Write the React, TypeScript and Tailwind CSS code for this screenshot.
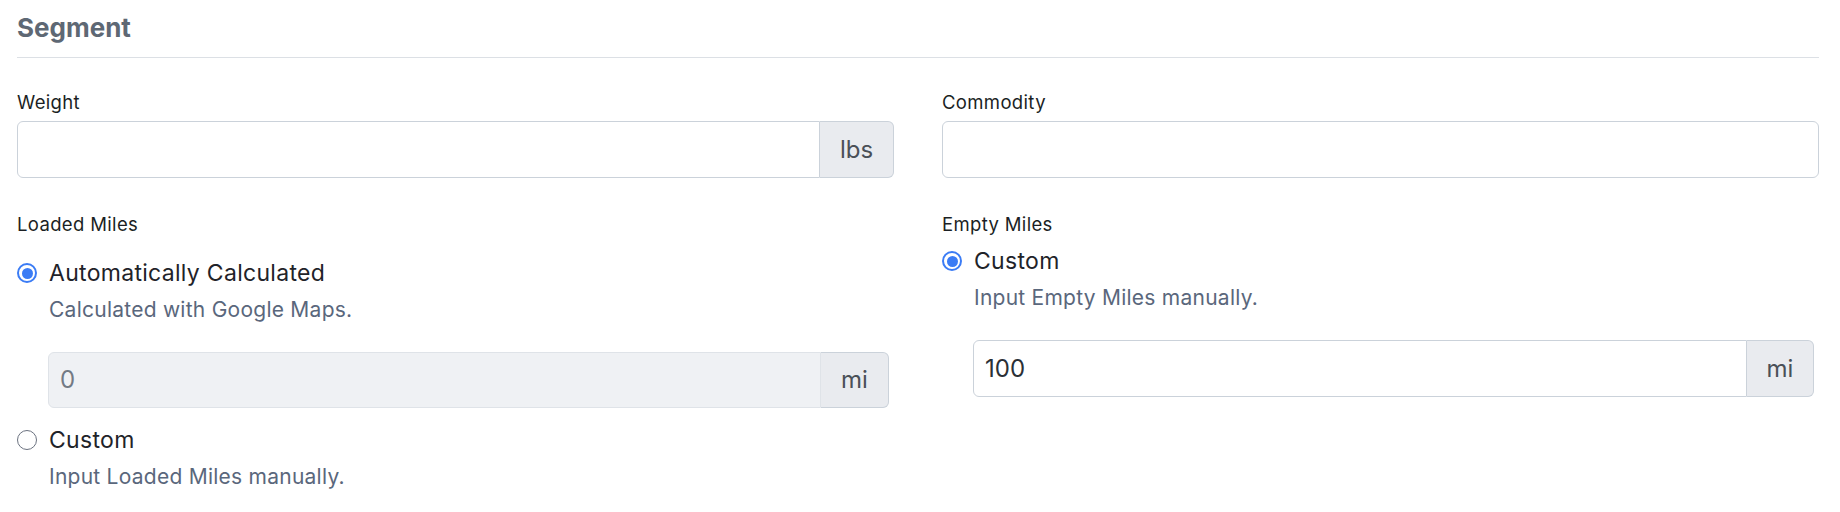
import React from 'react';

const font = { fontFamily: 'Inter, "Noto Sans", sans-serif' };

const Radio: React.FC<{ checked?: boolean }> = ({ checked }) =>
  checked ? (
    <span className="flex h-[20px] w-[20px] shrink-0 items-center justify-center rounded-full border-[2px] border-[#3b7cf5] bg-white">
      <span className="h-[11px] w-[11px] rounded-full bg-[#3b7cf5]" />
    </span>
  ) : (
    <span className="h-[20px] w-[20px] shrink-0 rounded-full border-[1.5px] border-[#6b7280] bg-white" />
  );

const InputGroup: React.FC<{ value?: string; unit: string; unitWidth: string; disabled?: boolean; height?: string }> = ({
  value,
  unit,
  unitWidth,
  disabled,
  height = 'h-[57px]',
}) => (
  <div className={`flex ${height} w-full`}>
    <div
      className={`flex flex-1 items-center rounded-l-[6px] border px-[11px] text-[24px] ${
        disabled ? 'border-[#dfe3e8] bg-[#eff1f4] text-[#737a84]' : 'border-[#cbd2da] bg-white text-[#2b3036]'
      }`}
    >
      {value}
    </div>
    <div
      className={`flex ${unitWidth} items-center justify-center rounded-r-[6px] border border-l-0 border-[#cbd2da] bg-[#e9ebef] text-[24px] text-[#4a5058]`}
    >
      {unit}
    </div>
  </div>
);

const Option: React.FC<{ checked?: boolean; title: string; desc: string; className?: string }> = ({
  checked,
  title,
  desc,
  className = '',
}) => (
  <div className={className}>
    <div className="flex items-center gap-[12px]">
      <Radio checked={checked} />
      <span className="text-[23px] leading-[30px] tracking-[0.3px] text-[#1f2329]">{title}</span>
    </div>
    <div className="mt-[8px] pl-[32px] text-[21px] leading-[28px] tracking-[0.25px] text-[#5a677c]">{desc}</div>
  </div>
);

const labelCls = 'block text-[18.5px] leading-[24px] tracking-[0.35px] text-[#1b1f24]';

export default function App() {
  return (
    <div className="h-[512px] w-full bg-white pl-[17px] pr-[21px]" style={font}>
      {/* Header */}
      <div className="h-[58px] border-b border-[#dce0e5] pt-[12px]">
        <h2 className="text-[26px] font-bold leading-[32px] text-[#5e6874]">Segment</h2>
      </div>

      <div className="mt-[32px] grid grid-cols-2 gap-x-[48px]">
        {/* Weight */}
        <div>
          <label className={labelCls}>Weight</label>
          <div className="mt-[7px]">
            <InputGroup unit="lbs" unitWidth="w-[74px]" />
          </div>
        </div>

        {/* Commodity */}
        <div>
          <label className={labelCls}>Commodity</label>
          <div className="mt-[7px] h-[57px] w-full rounded-[6px] border border-[#cbd2da] bg-white" />
        </div>

        {/* Loaded Miles */}
        <div className="mt-[34px]">
          <label className={labelCls}>Loaded Miles</label>
          <Option
            className="mt-[22px]"
            checked
            title="Automatically Calculated"
            desc="Calculated with Google Maps."
          />
          <div className="ml-[31px] mr-[5px] mt-[28px]">
            <InputGroup value="0" unit="mi" unitWidth="w-[68px]" disabled height="h-[56px]" />
          </div>
          <Option className="mt-[17px]" title="Custom" desc="Input Loaded Miles manually." />
        </div>

        {/* Empty Miles */}
        <div className="mt-[34px]">
          <label className={labelCls}>Empty Miles</label>
          <Option className="mt-[10px]" checked title="Custom" desc="Input Empty Miles manually." />
          <div className="ml-[31px] mr-[5px] mt-[28px]">
            <InputGroup value="100" unit="mi" unitWidth="w-[67px]" />
          </div>
        </div>
      </div>
    </div>
  );
}
